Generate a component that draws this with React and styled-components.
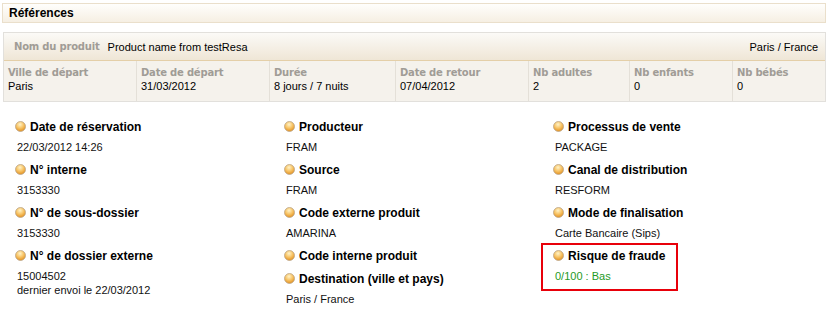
import React from "react";
import styled, { createGlobalStyle } from "styled-components";

const Global = createGlobalStyle`
  html, body { margin: 0; padding: 0; background: #fff; }
  body { font-family: "Liberation Sans", Arial, sans-serif; font-size: 11px; color: #000; }
`;

const Page = styled.div`
  width: 830px;
  padding: 3px 4px 0 2px;
  box-sizing: border-box;
`;

const TitleBar = styled.div`
  height: 18px;
  border: 1px solid #eadfcb;
  background: linear-gradient(#fffefc, #f6efe3);
  display: flex;
  align-items: center;
  padding-left: 6px;
  font-weight: bold;
  font-size: 12px;
`;

const ProductBox = styled.div`
  margin: 9px 0 0 1px;
  border: 1px solid #e2e0dc;
`;

const ProductRow = styled.div`
  height: 27px;
  display: flex;
  align-items: center;
  padding: 0 7px 0 10px;
  background: linear-gradient(#fbfaf7, #efe6d6);
  border-bottom: 1px solid #e4cfa8;
`;

const GreyLabel = styled.span`
  color: #a09c96;
  font-weight: bold;
  font-size: 10px;
  font-family: "DejaVu Sans", Tahoma, sans-serif;
  letter-spacing: -0.2px;
`;

const ProductName = styled.span`
  margin-left: 8px;
  flex: 1;
`;

const StatsRow = styled.div`
  display: grid;
  grid-template-columns: 132px 133px 126px 133px 101px 103px 1fr;
  background: #f5f2ec;
`;

const StatCell = styled.div`
  padding: 6px 4px 0 4px;
  height: 34px;
  border-left: ${(p) => (p.$first ? "none" : "1px solid #e4e0d8")};
  display: flex;
  flex-direction: column;
  gap: 2px;
`;

const Details = styled.div`
  display: grid;
  grid-template-columns: 269px 269px 1fr;
  padding: 17px 0 0 13px;
`;

const Column = styled.div`
  display: flex;
  flex-direction: column;
`;

const Field = styled.div`
  display: flex;
  flex-direction: column;
  align-self: flex-start;
  margin-bottom: ${(p) => (p.$tight ? "8px" : "8px")};
  ${(p) =>
    p.$alert
      ? `border: 2px solid #e8000a; width: 137px; box-sizing: border-box; margin: -5px 0 0 -12px; padding: 3px 0 6px 10px;`
      : ""}
`;

const Label = styled.div`
  display: flex;
  align-items: center;
  gap: 4px;
  font-weight: bold;
  font-size: 12px;
  font-family: "Liberation Sans", Arial, sans-serif;
  height: 15px;
`;

const Value = styled.div`
  margin-top: 6px;
  padding-left: 2px;
  line-height: 14px;
  color: ${(p) => p.$color || "#111"};
  min-height: 14px;
`;

const Bullet = () => (
  <svg width="11" height="11" viewBox="0 0 11 11">
    <defs>
      <radialGradient id="bg" cx="0.45" cy="0.3" r="0.7">
        <stop offset="0" stopColor="#fff3c8" />
        <stop offset="0.5" stopColor="#f8c66a" />
        <stop offset="1" stopColor="#e3901e" />
      </radialGradient>
    </defs>
    <circle cx="5.5" cy="5.5" r="5" fill="url(#bg)" stroke="#bba68a" strokeWidth="0.8" />
  </svg>
);

const stats = [
  ["Ville de départ", "Paris"],
  ["Date de départ", "31/03/2012"],
  ["Durée", "8 jours / 7 nuits"],
  ["Date de retour", "07/04/2012"],
  ["Nb adultes", "2"],
  ["Nb enfants", "0"],
  ["Nb bébés", "0"],
];

const columns = [
  [
    { l: "Date de réservation", v: ["22/03/2012 14:26"] },
    { l: "N° interne", v: ["3153330"] },
    { l: "N° de sous-dossier", v: ["3153330"] },
    { l: "N° de dossier externe", v: ["15004502", "dernier envoi le 22/03/2012"] },
  ],
  [
    { l: "Producteur", v: ["FRAM"] },
    { l: "Source", v: ["FRAM"] },
    { l: "Code externe produit", v: ["AMARINA"] },
    { l: "Code interne produit", v: [], tight: true },
    { l: "Destination (ville et pays)", v: ["Paris / France"] },
  ],
  [
    { l: "Processus de vente", v: ["PACKAGE"] },
    { l: "Canal de distribution", v: ["RESFORM"] },
    { l: "Mode de finalisation", v: ["Carte Bancaire (Sips)"] },
    { l: "Risque de fraude", v: ["0/100 : Bas"], alert: true, color: "#1f9a1f" },
  ],
];

export default function App() {
  return (
    <>
      <Global />
      <Page>
        <TitleBar>Références</TitleBar>
        <ProductBox>
          <ProductRow>
            <GreyLabel>Nom du produit</GreyLabel>
            <ProductName>Product name from testResa</ProductName>
            <span>Paris / France</span>
          </ProductRow>
          <StatsRow>
            {stats.map(([l, v], i) => (
              <StatCell key={l} $first={i === 0}>
                <GreyLabel>{l}</GreyLabel>
                <span>{v}</span>
              </StatCell>
            ))}
          </StatsRow>
        </ProductBox>
        <Details>
          {columns.map((col, ci) => (
            <Column key={ci}>
              {col.map((f) => (
                <Field key={f.l} $alert={f.alert} $tight={f.tight}>
                  <Label>
                    <Bullet />
                    {f.l}
                  </Label>
                  {f.v.length > 0 && (
                    <Value $color={f.color}>
                      {f.v.map((line) => (
                        <div key={line}>{line}</div>
                      ))}
                    </Value>
                  )}
                </Field>
              ))}
            </Column>
          ))}
        </Details>
      </Page>
    </>
  );
}
